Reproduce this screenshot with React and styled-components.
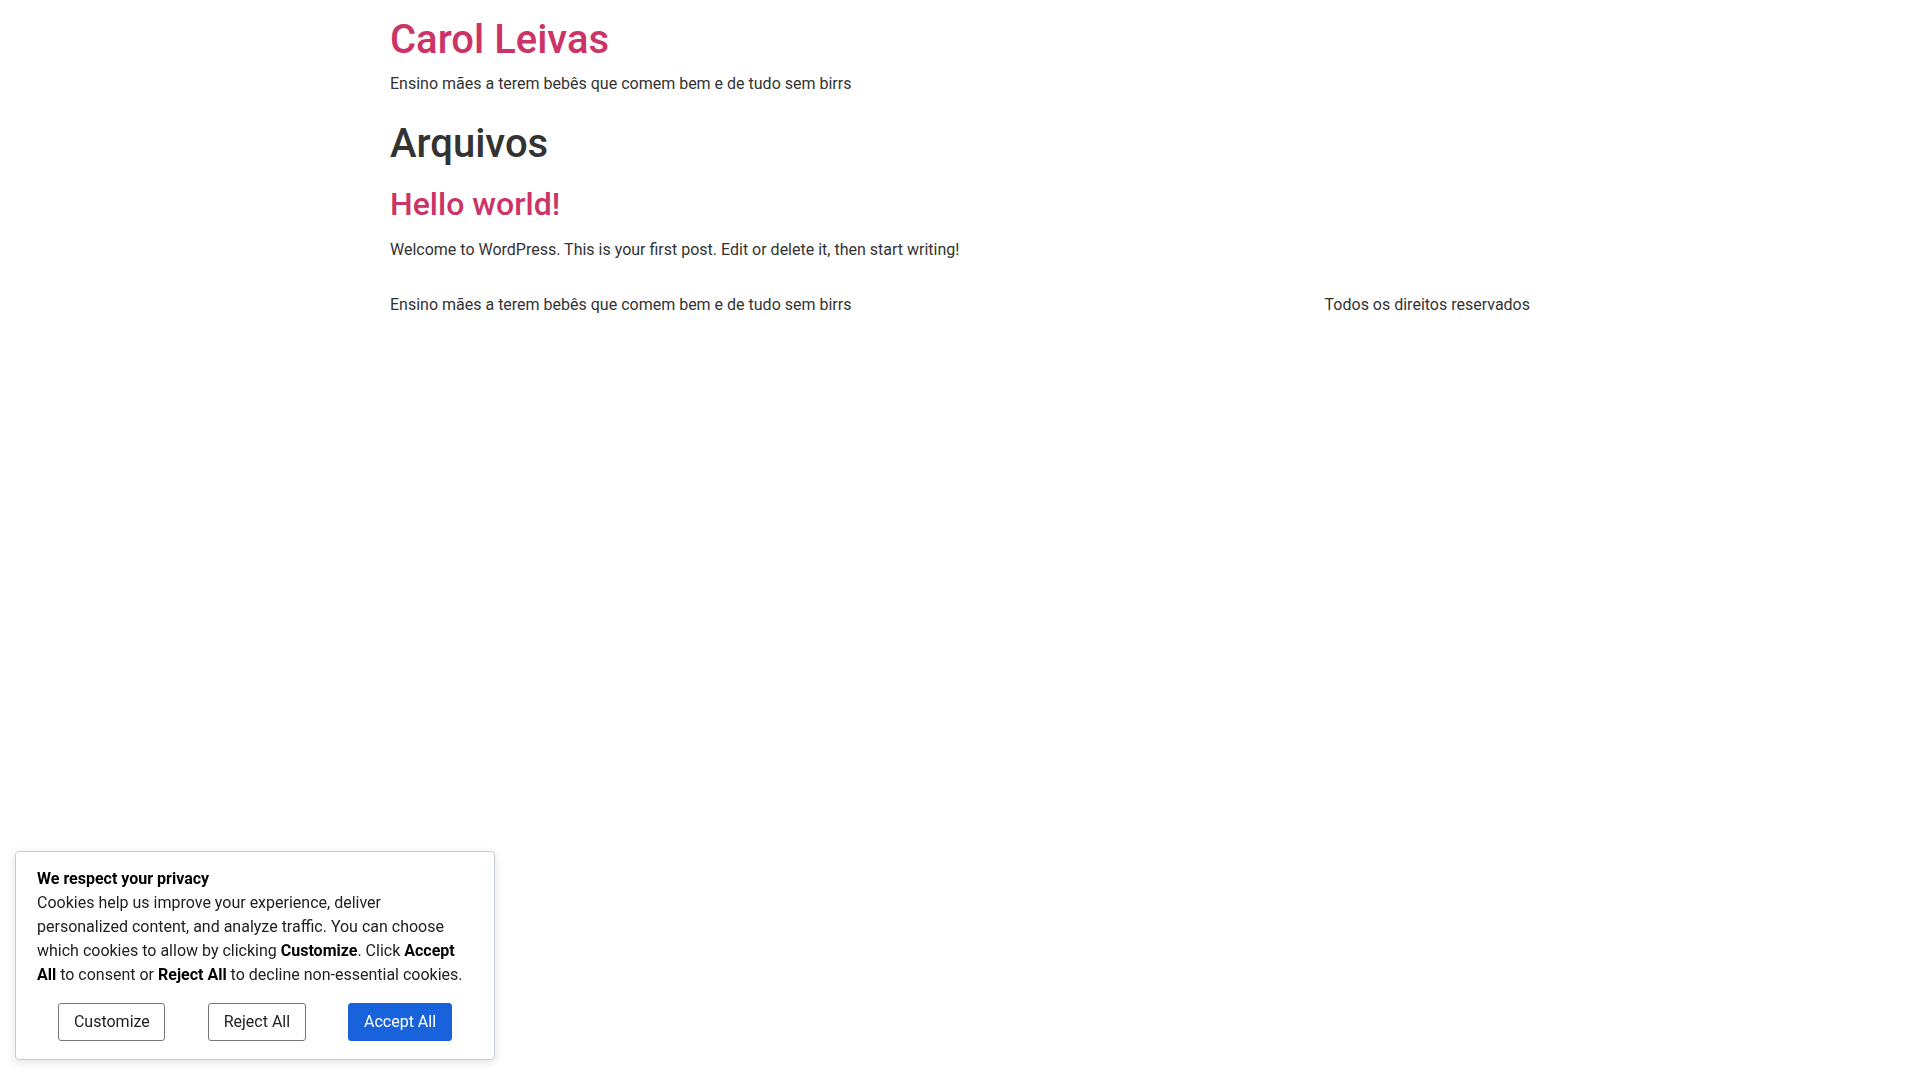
import styled, { createGlobalStyle } from 'styled-components';

const GlobalStyle = createGlobalStyle`
  html, body {
    margin: 0;
    padding: 0;
    background: #fff;
  }
  body {
    font-family: Roboto, "Liberation Sans", sans-serif;
    font-size: 16px;
    line-height: 1.5;
    color: #333;
    -webkit-font-smoothing: antialiased;
  }
`;

const S = {
  Page: styled.div`
    width: 1140px;
    margin: 0 auto;
  `,
  Header: styled.header`
    padding: 16px 0;
  `,
  SiteTitle: styled.h1`
    margin: 0 0 8px;
    font-size: 40px;
    line-height: 1.2;
    font-weight: 500;
    a {
      color: #cc3366;
      text-decoration: none;
    }
  `,
  Tagline: styled.p`
    margin: 0;
  `,
  Main: styled.main``,
  PageTitle: styled.h1`
    margin: 8px 0 8px;
    font-size: 40px;
    line-height: 1.2;
    font-weight: 500;
    color: #333;
  `,
  PostTitle: styled.h2`
    margin: 17px 0 15px;
    font-size: 32px;
    line-height: 1.2;
    font-weight: 500;
    a {
      color: #cc3366;
      text-decoration: none;
    }
  `,
  Excerpt: styled.p`
    margin: 0 0 15px;
  `,
  Footer: styled.footer`
    display: flex;
    justify-content: space-between;
    padding: 16px 0;
  `,
  FooterText: styled.p`
    margin: 0;
  `,
  Banner: styled.div`
    position: fixed;
    left: 15px;
    bottom: 20px;
    width: 480px;
    box-sizing: border-box;
    padding: 15px 21px 18px;
    background: #fff;
    border: 1px solid #c6ccd4;
    border-radius: 4px;
    box-shadow: 0 2px 10px rgba(0, 0, 0, 0.12);
    font-family: Roboto, "Liberation Sans", sans-serif;
    color: #212121;
  `,
  BannerTitle: styled.p`
    margin: 0;
    font-size: 16px;
    line-height: 24px;
    font-weight: 700;
    color: #000;
  `,
  BannerText: styled.p`
    margin: 0;
    font-size: 16px;
    line-height: 24px;
    color: #212121;
    max-width: 436px;
    b {
      font-weight: 700;
      color: #000;
    }
  `,
  Buttons: styled.div`
    display: flex;
    justify-content: space-around;
    margin-top: 16px;
  `,
  Button: styled.button`
    font-family: Roboto, "Liberation Sans", sans-serif;
    font-size: 16px;
    line-height: 20px;
    padding: 8px 14.5px;
    border-radius: 3px;
    border: 1px solid ${p => (p.$primary ? '#1863dc' : '#767676')};
    background: ${p => (p.$primary ? '#1863dc' : '#fff')};
    color: ${p => (p.$primary ? '#fff' : '#212121')};
    cursor: pointer;
  `,
};

const tagline = 'Ensino mães a terem bebês que comem bem e de tudo sem birrs';

const App = () => {
  return (
    <>
      <GlobalStyle />
      <S.Page>
        <S.Header>
          <S.SiteTitle>
            <a href="#">Carol Leivas</a>
          </S.SiteTitle>
          <S.Tagline>{tagline}</S.Tagline>
        </S.Header>
        <S.Main>
          <S.PageTitle>Arquivos</S.PageTitle>
          <article>
            <S.PostTitle>
              <a href="#">Hello world!</a>
            </S.PostTitle>
            <S.Excerpt>
              Welcome to WordPress. This is your first post. Edit or delete it, then start writing!
            </S.Excerpt>
          </article>
        </S.Main>
        <S.Footer>
          <S.FooterText>{tagline}</S.FooterText>
          <S.FooterText>Todos os direitos reservados</S.FooterText>
        </S.Footer>
      </S.Page>

      <S.Banner>
        <S.BannerTitle>We respect your privacy</S.BannerTitle>
        <S.BannerText>
          Cookies help us improve your experience, deliver personalized content, and analyze
          traffic. You can choose which cookies to allow by clicking <b>Customize</b>. Click{' '}
          <b>Accept All</b> to consent or <b>Reject All</b> to decline non-essential cookies.
        </S.BannerText>
        <S.Buttons>
          <S.Button>Customize</S.Button>
          <S.Button>Reject All</S.Button>
          <S.Button $primary>Accept All</S.Button>
        </S.Buttons>
      </S.Banner>
    </>
  );
};

export default App;
